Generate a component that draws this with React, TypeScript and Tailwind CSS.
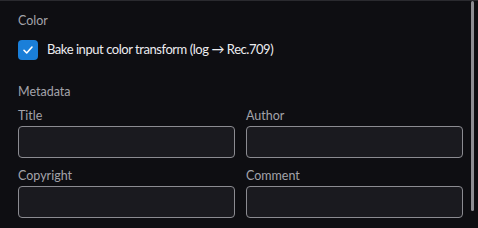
import React from 'react';

const fields = [
  ['Title', 'Author'],
  ['Copyright', 'Comment'],
];

const Field: React.FC<{ label: string }> = ({ label }) => (
  <div className="flex flex-col">
    <label className="h-[18px] pt-px text-[12.5px] leading-[18px] text-[#a3a3aa] mb-[2px]">{label}</label>
    <input
      type="text"
      className="h-8 w-full rounded-[4px] border border-[#8b8b91] bg-[#1a1a1f] px-2 text-[13px] text-[#e6e6ea] outline-none"
    />
  </div>
);

export default function App() {
  return (
    <div
      className="relative h-[228px] w-[478px] overflow-hidden border-t border-[#2a2a2f] bg-[#0e0e12]"
      style={{ fontFamily: 'Lato, "Noto Sans", sans-serif' }}
    >
      <div className="pl-[18px] pr-[15px] pt-[10px]">
        {/* Color section */}
        <div className="h-5 text-[12.5px] leading-5 text-[#a3a3aa]">Color</div>
        <label className="mt-[9px] flex h-5 items-center gap-[9px]">
          <span className="flex h-5 w-5 items-center justify-center rounded-[4px] bg-[#1a7fd9]">
            <svg width="12" height="12" viewBox="0 0 12 12" fill="none">
              <path d="M2 6.3 4.7 9 10 3" stroke="white" strokeWidth="1.6" strokeLinecap="round" strokeLinejoin="round" />
            </svg>
          </span>
          <span className="text-[13px] tracking-[-0.45px] text-[#ececf0]">Bake input color transform (log → Rec.709)</span>
        </label>

        {/* Metadata section */}
        <div className="mt-[22px] h-5 text-[12.5px] leading-5 text-[#a3a3aa]">Metadata</div>
        <div className="mt-[4px] flex flex-col gap-2">
          {fields.map((row) => (
            <div key={row[0]} className="grid grid-cols-2 gap-x-[11px]">
              {row.map((f) => (
                <Field key={f} label={f} />
              ))}
            </div>
          ))}
        </div>
      </div>

      {/* scrollbar thumb */}
      <div className="absolute right-[4px] top-0 h-[210px] w-[3px] rounded-full bg-[#8d8d93]" />
    </div>
  );
}
